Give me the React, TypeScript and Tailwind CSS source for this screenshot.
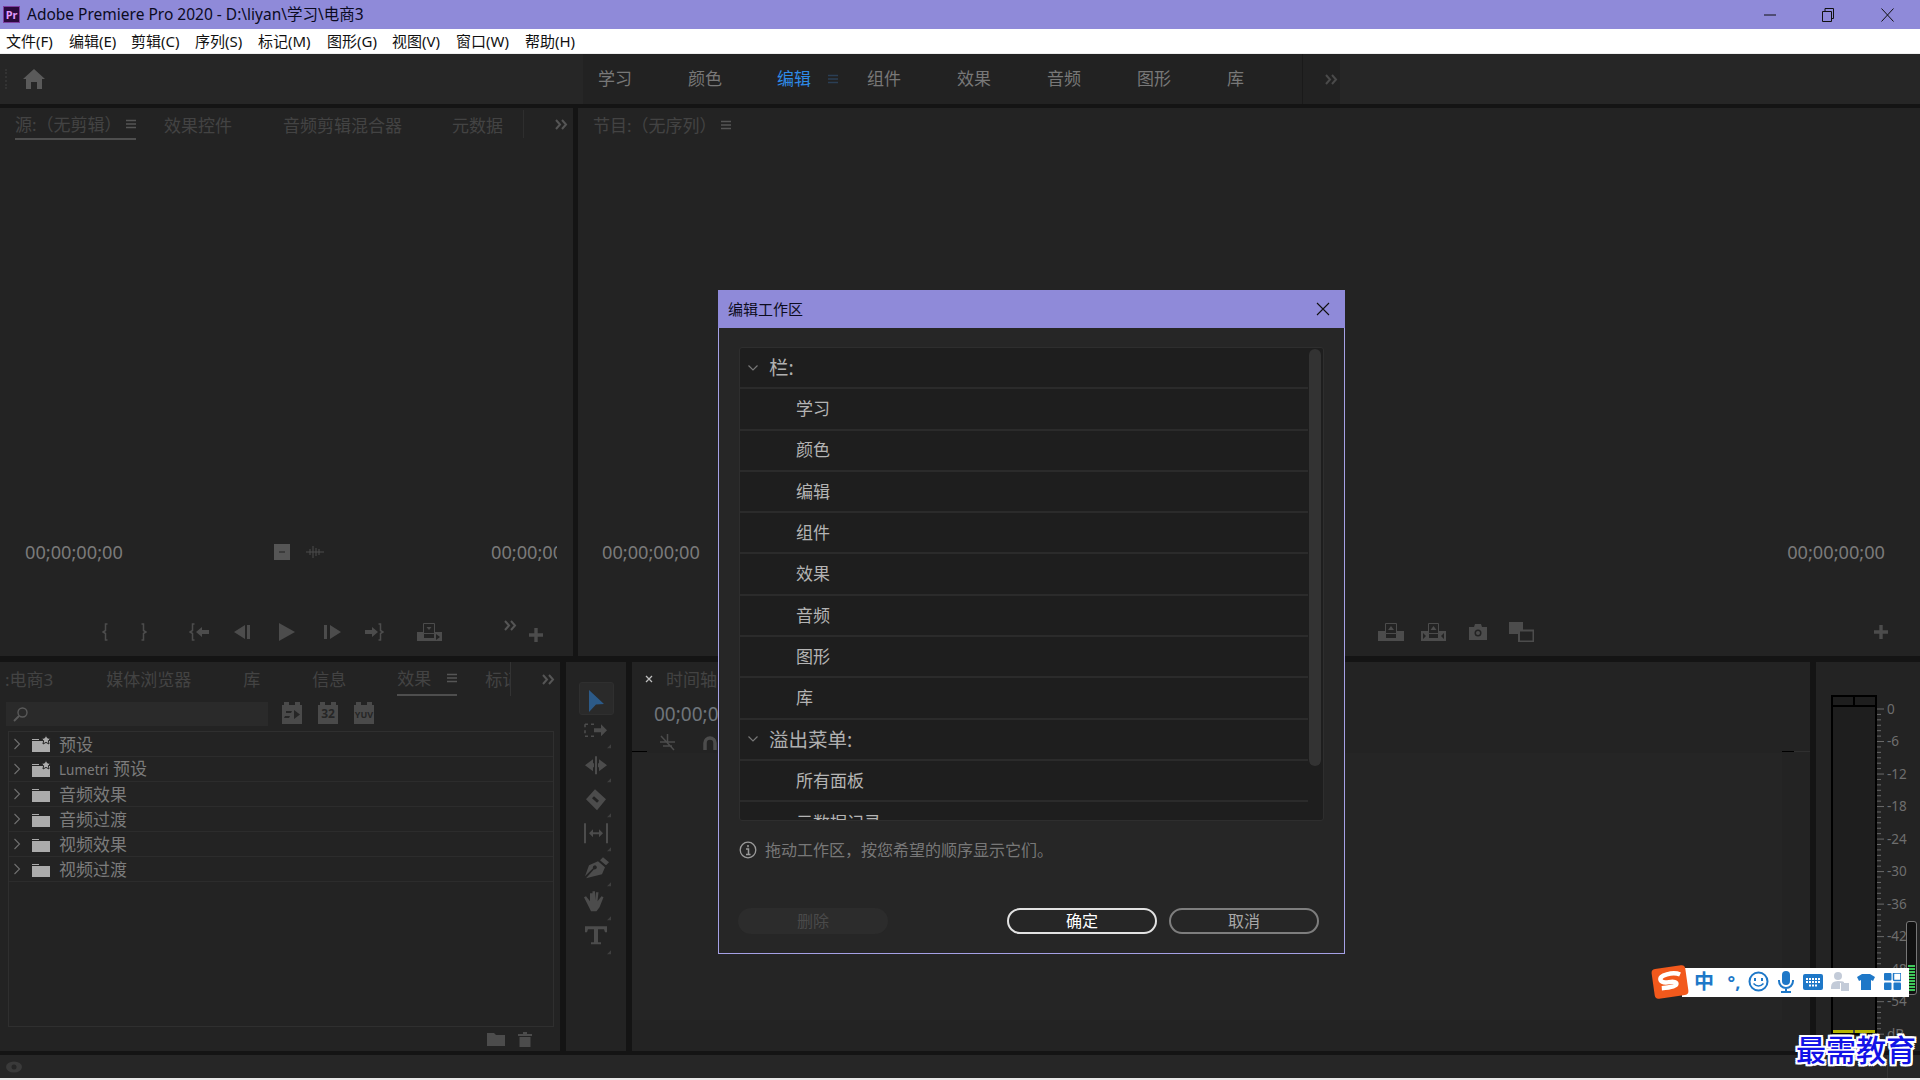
const tabText = "text-[17px] leading-none text-[#434343] whitespace-nowrap";
const dim = "#4c4c4c";

function MenuLines({ color = "#555555" }: { color?: string }) {
  return (
    <svg width="10" height="10" viewBox="0 0 10 10" className="shrink-0">
      <path d="M0 1.5H10M0 5H10M0 8.5H10" stroke={color} strokeWidth="1.4" />
    </svg>
  );
}

function Chevrons({ color = "#555555" }: { color?: string }) {
  return (
    <svg width="13" height="11" viewBox="0 0 13 11" className="shrink-0">
      <path d="M1 1l4 4.5-4 4.5M7 1l4 4.5-4 4.5" fill="none" stroke={color} strokeWidth="2" />
    </svg>
  );
}

function Plus() {
  return (
    <svg width="14" height="14" viewBox="0 0 14 14" className="shrink-0">
      <path d="M7 0v14M0 7h14" stroke={dim} strokeWidth="3.4" />
    </svg>
  );
}

function Ico({ w, h, ml = 0, children }: { w: number; h: number; ml?: number; children: React.ReactNode }) {
  return (
    <svg width={w} height={h} viewBox={`0 0 ${w} ${h}`} className="shrink-0" style={{ marginLeft: ml }} fill={dim}>
      {children}
    </svg>
  );
}

const braceL = "M5.500 1H3.500V7.500L1 9L3.500 10.500V17H5.500";
const braceR = "M.5 1H2.500V7.500L5 9L2.500 10.500V17H.5";

function SourceTransport() {
  return (
    <div className="h-[24px] flex items-center pl-[102px]">
      <Ico w={6} h={18}><path d={braceL} fill="none" stroke={dim} strokeWidth="1.500" /></Ico>
      <Ico w={6} h={18} ml={33}><path d={braceR} fill="none" stroke={dim} strokeWidth="1.500" /></Ico>
      <Ico w={20} h={18} ml={42}>
        <path d={braceL} fill="none" stroke={dim} strokeWidth="1.500" />
        <path d="M7 9l6-5v3h7v4h-7v3z" />
      </Ico>
      <Ico w={17} h={14} ml={25}><path d="M0 7l11-7v14zM13 0h3v14h-3z" /></Ico>
      <Ico w={16} h={18} ml={28}><path d="M0 0l16 9-16 9z" /></Ico>
      <Ico w={17} h={14} ml={29}><path d="M0 0h3v14H0zM6 0l11 7-11 7z" /></Ico>
      <Ico w={19} h={18} ml={24}>
        <path d="M13 9L7 4v3H0v4h7v3z" />
        <path d={braceR} transform="translate(13 0)" fill="none" stroke={dim} strokeWidth="1.500" />
      </Ico>
      <Ico w={25} h={18} ml={33}>
        <path d="M0 9h7v9H0zM17 9h8v9h-8zM7 15h10v3H7z" />
        <path d="M6.5.5h11v10h-11z" fill="#232323" stroke={dim} />
        <path d="M9.500 4h5l-2.500 3z" />
        <path d="M19 11l4 3-4 3z" fill="#232323" />
      </Ico>
      <div className="ml-[62px] -mt-[14px]"><Chevrons color="#555555" /></div>
      <div className="ml-[12px] mt-[6px]"><Plus /></div>
    </div>
  );
}

function ProgramButtons() {
  return (
    <div className="h-[24px] flex items-center">
      <Ico w={26} h={18}>
        <path d="M0 8h8v10H0zM18 8h8v10h-8zM8 15h10v3H8z" />
        <path d="M7.500.5h11v10h-11z" fill="#232323" stroke={dim} />
        <path d="M13 3l3 4h-6z" />
      </Ico>
      <Ico w={25} h={18} ml={17}>
        <path d="M0 8h8v10H0zM17 8h8v10h-8zM8 15h9v3H8z" />
        <path d="M7.500.5h10v10h-10z" fill="#232323" stroke={dim} />
        <path d="M12.500 3l3 4h-6z" />
        <path d="M2 10l3 3-3 3zM23 10l-3 3 3 3z" fill="#232323" />
      </Ico>
      <Ico w={18} h={16} ml={23}>
        <path d="M0 3h5l1-3h6l1 3h5v13H0z" />
        <circle cx="9" cy="9" r="3.500" fill="#232323" />
        <circle cx="9" cy="9" r="2" fill={dim} />
      </Ico>
      <Ico w={25} h={20} ml={22}>
        <path d="M0 0h14v12H0z" />
        <path d="M10 8.500h14.500v11H10z" fill="#232323" stroke={dim} strokeWidth="2" />
      </Ico>
      <div className="ml-[340px]"><Plus /></div>
    </div>
  );
}

function FolderIcon({ star }: { star?: boolean }) {
  return (
    <svg width="20" height="18" viewBox="0 0 20 18" className="shrink-0 ml-[10px]" fill="#ababab">
      <path d="M1 4h7v1H1zM1 6h18v11H1z" />
      {star && <path d="M15 0l1.500 3 3.300.4-2.400 2.300.6 3.300-3-1.600-3 1.600.6-3.300-2.400-2.300 3.300-.4z" stroke="#232323" strokeWidth="1" />}
    </svg>
  );
}

function ToolCorner() {
  return <path d="M30 30h-4l4-4z" fill="#3f3f3f" />;
}

const toolIcons: React.ReactNode[] = [
  <g transform="translate(0 3)">
    <path d="M4 3h3M10 3h3M4 3v3M4 9v3M4 15h3M10 15h3" fill="none" stroke={dim} strokeWidth="1.600" />
    <path d="M13 7h7V3l6 6-6 6v-4h-7z" />
  </g>,
  <g transform="translate(0 3)">
    <path d="M14 1h2v18h-2z" />
    <path d="M4 10l8-6v4h1v4h-1v4zM26 10l-8-6v4h-1v4h1v4z" />
  </g>,
  <g transform="translate(0 2)">
    <path d="M14 0l11 10-9 11L5 10zM13 7l-2 2 5 4.500 2-2z" fillRule="evenodd" />
  </g>,
  <g transform="translate(0 2)">
    <path d="M3 0h2v20H3zM25 0h2v20h-2z" />
    <path d="M8 10l4-4v3h6V6l4 4-4 4v-3h-6v3z" />
  </g>,
  <path d="M22 1l6 5-3 3-6-5zM17 5l7 6-3 7-16 4 8-9a2 2 0 1 0-1-1L4 20l4-11z" />,
  <path d="M6 13L3 7l2-1 4 5V3h2.500v7V1h2.500v9l1-8h2.500l-1 9 4-5 2 1-4 10-3 4H10z" />,
  <path d="M4 2h22v6h-2l-1-3h-6v13h3v2H10v-2h3V5H7L6 8H4z" />,
];

function ImeBar() {
  return (
    <div className="absolute left-[1653px] top-[964px] w-[256px] h-[35px] flex items-center">
      <div className="absolute left-[29px] top-[4px] right-0 h-[29px] bg-white" />
      <div className="relative w-[34px] h-[30px] rounded-[4px] -rotate-[8deg] bg-[#f2591c] flex items-center justify-center">
        <svg width="28" height="22" viewBox="0 0 28 22">
          <path d="M25 5Q20 2 12 3Q4 4 5 8Q6 11 13 11Q21 11 20 14Q19 17 5 16" fill="none" stroke="#ffffff" strokeWidth="4.500" />
        </svg>
      </div>
      <div className="relative flex items-center ml-[6px] text-[#1e78c8]">
        <span className="w-[22px] text-[20px] leading-none font-bold text-center">中</span>
        <span className="w-[24px] ml-[7px] text-[18px] leading-none font-bold text-center">°,</span>
        <svg width="21" height="21" viewBox="0 0 21 21" className="ml-[2px]">
          <circle cx="10.500" cy="10.500" r="9" fill="none" stroke="#1e78c8" strokeWidth="2" />
          <path d="M7 7v3M14 7v3" stroke="#1e78c8" strokeWidth="2" />
          <path d="M5.500 12.500q5 5 10 0" fill="none" stroke="#1e78c8" strokeWidth="1.600" />
        </svg>
        <svg width="16" height="22" viewBox="0 0 16 22" className="ml-[9px]" fill="#1e78c8">
          <rect x="4" y="0" width="8" height="14" rx="4" />
          <path d="M1 9v1a7 7 0 0 0 14 0V9M8 17v3M3 21h10" fill="none" stroke="#1e78c8" strokeWidth="2" />
        </svg>
        <svg width="20" height="16" viewBox="0 0 20 16" className="ml-[9px]">
          <rect x="0" y="0" width="20" height="16" rx="2" fill="#1e78c8" />
          <path d="M3 5h14M3 8h14M6 11.500h8" stroke="#ffffff" strokeWidth="2" strokeDasharray="2 1" />
        </svg>
        <svg width="18" height="19" viewBox="0 0 18 19" className="ml-[8px]" fill="#c3cbd8">
          <circle cx="7" cy="4" r="4" />
          <path d="M0 15q0-6 7-6t6 2H9v6H0z" />
          <rect x="10" y="11" width="8" height="8" />
        </svg>
        <svg width="18" height="16" viewBox="0 0 18 16" className="ml-[8px]" fill="#1e78c8">
          <path d="M5 0h8l5 3-2 4-2-1v10H4V6L2 7 0 3z" />
        </svg>
        <svg width="17" height="17" viewBox="0 0 17 17" className="ml-[9px]" fill="#1e78c8">
          <rect x="0" y="0" width="7.500" height="7.500" rx="1" />
          <rect x="9.500" y="0" width="7.500" height="7.500" rx="1" fill="#ffffff" stroke="#1e78c8" strokeWidth="1.500" />
          <rect x="0" y="9.500" width="7.500" height="7.500" rx="1" />
          <rect x="9.500" y="9.500" width="7.500" height="7.500" rx="1" />
        </svg>
      </div>
    </div>
  );
}

function Dialog() {
  const rows = ["学习", "颜色", "编辑", "组件", "效果", "音频", "图形", "库"];
  return (
    <div className="absolute left-[718px] top-[290px] w-[627px] h-[664px] border border-[#a5a1e6] border-t-0 bg-[#262626] flex flex-col">
      <div className="h-[38px] -mx-[1px] bg-[#8f8ad9] flex items-center pl-[10px] pr-[15px] justify-between">
        <span className="text-[15px] text-[#0c0c20]">编辑工作区</span>
        <svg width="14" height="14" viewBox="0 0 14 14">
          <path d="M1 1l12 12M13 1L1 13" stroke="#111111" strokeWidth="1.100" />
        </svg>
      </div>
      <div className="mt-[19px] mx-[20px] h-[474px] border border-[#2e2e2e] rounded-[3px] bg-[#1e1e1e] flex overflow-hidden">
        <div className="flex-1">
          <div className="h-[41.3px] border-b-2 border-[#2b2b2b] flex items-center pl-[7px]">
            <svg width="12" height="8" viewBox="0 0 12 8"><path d="M1.500 1.500L6 6l4.500-4.500" fill="none" stroke="#777777" strokeWidth="1.200" /></svg>
            <span className="ml-[10px] text-[19.500px] text-[#b0b0b0]">栏:</span>
          </div>
          {rows.map((r) => (
            <div key={r} className="h-[41.3px] border-b-2 border-[#2b2b2b] flex items-center pl-[56px] text-[17px] text-[#b4b4b4]">{r}</div>
          ))}
          <div className="h-[41.3px] border-b-2 border-[#2b2b2b] flex items-center pl-[7px]">
            <svg width="12" height="8" viewBox="0 0 12 8"><path d="M1.500 1.500L6 6l4.500-4.500" fill="none" stroke="#777777" strokeWidth="1.200" /></svg>
            <span className="ml-[10px] text-[19.500px] text-[#b0b0b0]">溢出菜单:</span>
          </div>
          <div className="h-[41.3px] border-b-2 border-[#2b2b2b] flex items-center pl-[56px] text-[17px] text-[#b4b4b4]">所有面板</div>
          <div className="h-[41.3px] flex items-center pl-[56px] text-[17px] text-[#b4b4b4]">元数据记录</div>
        </div>
        <div className="w-[15px] pl-[1px] pr-[2px] pt-[1px]">
          <div className="h-[417px] rounded-full bg-[#333333]" />
        </div>
      </div>
      <div className="mt-[19px] mx-[20px] h-[20px] flex items-center">
        <svg width="18" height="18" viewBox="0 0 18 18" className="shrink-0">
          <circle cx="9" cy="9" r="7.800" fill="none" stroke="#9a9a9a" strokeWidth="1.300" />
          <path d="M9 4v2.200M7 8h2.500v5M7 13.500h4.500" fill="none" stroke="#9a9a9a" strokeWidth="1.500" />
        </svg>
        <span className="ml-[8px] text-[16px] text-[#787878] whitespace-nowrap">拖动工作区，按您希望的顺序显示它们。</span>
      </div>
      <div className="mt-[48px] ml-[19px] flex">
        <div className="w-[150px] h-[26px] rounded-full bg-[#2c2c2c] text-[16px] text-[#4a4a4a] flex items-center justify-center">删除</div>
        <div className="ml-[119px] w-[150px] h-[26px] rounded-full border-2 border-[#e2e2e2] text-[16px] text-white flex items-center justify-center">确定</div>
        <div className="ml-[12px] w-[150px] h-[26px] rounded-full border-2 border-[#7e7e7e] text-[16px] text-[#a8a8a8] flex items-center justify-center">取消</div>
      </div>
    </div>
  );
}

export default function App() {
  const menus: [string, string][] = [
    ["文件(F)", "w-[63px]"], ["编辑(E)", "w-[62px]"], ["剪辑(C)", "w-[64px]"], ["序列(S)", "w-[63px]"],
    ["标记(M)", "w-[69px]"], ["图形(G)", "w-[65px]"], ["视图(V)", "w-[64px]"], ["窗口(W)", "w-[69px]"], ["帮助(H)", "w-[60px]"],
  ];
  const effects = ["预设", "Lumetri 预设", "音频效果", "音频过渡", "视频效果", "视频过渡"];
  const dbLabels = ["0", "-6", "-12", "-18", "-24", "-30", "-36", "-42", "-48", "-54", "dB"];
  return (
    <div className="relative w-screen h-screen overflow-hidden flex flex-col bg-[#141414] font-['Noto_Sans','Noto_Sans_CJK_SC',sans-serif]">
      {/* title bar */}
      <div className="h-[29px] shrink-0 bg-[#8f8ad9] flex items-center pl-[3px]">
        <div className="w-[17px] h-[17px] bg-[#2b0a3d] border border-[#7d3fa0] text-[#e39bff] text-[11px] leading-none font-bold flex items-center justify-center">Pr</div>
        <span className="ml-[7px] text-[15.500px] text-[#0b0b1e] whitespace-nowrap">Adobe Premiere Pro 2020 - D:\liyan\学习\电商3</span>
        <div className="ml-auto flex items-center pr-[26px]">
          <svg width="12" height="2" viewBox="0 0 12 2"><path d="M0 1h12" stroke="#111111" /></svg>
          <svg width="12" height="14" viewBox="0 0 12 14" className="ml-[46px]">
            <path d="M.5 3.500h9v10h-9zM3 3.500V.5h8.500v10H9.500" fill="none" stroke="#111111" />
          </svg>
          <svg width="13" height="14" viewBox="0 0 13 14" className="ml-[47px]"><path d="M.5.5l12 13M12.500.5l-12 13" stroke="#111111" /></svg>
        </div>
      </div>
      {/* menu bar */}
      <div className="h-[25px] shrink-0 bg-white border-b border-[#efefef] flex items-center pl-[6px] text-[15px] text-[#111111]">
        {menus.map(([m, w]) => (
          <span key={m} className={`${w} whitespace-nowrap`}>{m}</span>
        ))}
      </div>
      {/* workspace bar */}
      <div className="h-[50px] shrink-0 bg-[#262626] flex">
        <div className="w-[583px] flex items-center pl-[5px]">
          <div className="w-[2px] h-[20px] border-l-2 border-dotted border-[#333333]" />
          <svg width="22" height="20" viewBox="0 0 22 20" fill="#5a5a5a" className="ml-[16px]">
            <path d="M11 0l11 10h-3v10h-5v-7H8v7H3V10H0z" />
          </svg>
        </div>
        <div className="w-[720px] bg-[#222222] flex items-center pl-[15px] text-[17px] text-[#787878] border-r border-[#1a1a1a]">
          <span className="w-[90px]">学习</span>
          <span className="w-[89px]">颜色</span>
          <span className="text-[#2e8ae6] w-[51px]">编辑</span>
          <span className="w-[39px]"><MenuLines color="#2b3f55" /></span>
          <span className="w-[90px]">组件</span>
          <span className="w-[90px]">效果</span>
          <span className="w-[90px]">音频</span>
          <span className="w-[90px]">图形</span>
          <span>库</span>
        </div>
        <div className="w-[37px] bg-[#222222] flex items-center justify-center pl-[20px]"><Chevrons color="#4a4a4a" /></div>
      </div>
      <div className="flex-1 flex flex-col pt-[4px]">
        {/* upper panels */}
        <div className="h-[548px] shrink-0 flex">
          <div className="w-[573px] bg-[#232323] flex flex-col">
            <div className="h-[32px] flex items-center pl-[15px] relative">
              <div className="w-[121px] h-[32px] pt-[2px] border-b-2 border-[#4e4e4e] flex items-center justify-between">
                <span className={`${tabText} text-[#4e4e4e]`}>源:（无剪辑）</span>
                <MenuLines />
              </div>
              <span className={`${tabText} ml-[28px] pt-[2px]`}>效果控件</span>
              <span className={`${tabText} ml-[51px] pt-[2px]`}>音频剪辑混合器</span>
              <span className={`${tabText} ml-[50px] pt-[2px]`}>元数据</span>
              <div className="ml-[20px] w-px h-[28px] bg-[#2e2e2e]" />
              <div className="ml-auto mr-[5px]"><Chevrons /></div>
            </div>
            <div className="flex-1 flex flex-col justify-end pb-[12px]">
              <div className="h-[24px] flex items-center pl-[25px] text-[18.200px] leading-none text-[#7a7a7a]">
                <span className="w-[97px] whitespace-nowrap">00;00;00;00</span>
                <svg width="16" height="16" viewBox="0 0 16 16" className="ml-[152px]" fill="#555555">
                  <path d="M0 0h16v16H0z" />
                  <path d="M5 7.500h6v1H5z" fill="#232323" />
                </svg>
                <svg width="18" height="12" viewBox="0 0 18 12" className="ml-[16px]">
                  <path d="M0 6h18M4 3v6M7 0v12M10 2v8M13 3v6" stroke="#4c4c4c" />
                </svg>
                <span className="ml-[167px] w-[66px] overflow-hidden whitespace-nowrap">00;00;00;00</span>
              </div>
              <div className="h-[56px]" />
              <SourceTransport />
            </div>
          </div>
          <div className="w-[5px]" />
          <div className="flex-1 bg-[#232323] flex flex-col">
            <div className="h-[32px] pt-[2px] flex items-center pl-[15px]">
              <span className={tabText}>节目:（无序列）</span>
              <span className="ml-[4px]"><MenuLines /></span>
            </div>
            <div className="flex-1 flex flex-col justify-end pb-[12px]">
              <div className="h-[24px] flex items-center justify-between pr-[35px] pl-[24px] text-[18.200px] leading-none text-[#7a7a7a]">
                <span>00;00;00;00</span>
                <span>00;00;00;00</span>
              </div>
              <div className="h-[56px]" />
              <div className="flex justify-end pr-[32px]"><ProgramButtons /></div>
            </div>
          </div>
        </div>
        {/* lower panels */}
        <div className="h-[389px] shrink-0 mt-[6px] flex">
          <div className="w-[560px] bg-[#232323] flex flex-col">
            <div className="h-[34px] shrink-0 flex items-center pl-[5px]">
              <span className={tabText}>:电商3</span>
              <span className={`${tabText} ml-[53px]`}>媒体浏览器</span>
              <span className={`${tabText} ml-[52px]`}>库</span>
              <span className={`${tabText} ml-[52px]`}>信息</span>
              <div className="ml-[51px] w-[60px] h-[34px] border-b-2 border-[#4e4e4e] flex items-center justify-between">
                <span className={`${tabText} text-[#4e4e4e]`}>效果</span>
                <MenuLines />
              </div>
              <span className={`${tabText} ml-[28px] w-[25px] overflow-hidden`}>标记</span>
              <div className="w-px h-[34px] bg-[#333333]" />
              <div className="ml-auto mr-[5px]"><Chevrons /></div>
            </div>
            <div className="h-[35px] shrink-0 flex items-center pl-[6px]">
              <div className="w-[262px] h-[24px] bg-[#2a2a2a] flex items-center pl-[7px]">
                <svg width="16" height="16" viewBox="0 0 16 16">
                  <circle cx="9.500" cy="6.500" r="4.500" fill="none" stroke="#5a5a5a" strokeWidth="1.400" />
                  <path d="M6 10l-5 5" stroke="#5a5a5a" strokeWidth="1.800" />
                </svg>
              </div>
              {["", "32", "YUV"].map((t, i) => (
                <div key={t} className={`${i === 0 ? "ml-[14px]" : "ml-[16px]"} relative w-[20px] h-[19px] bg-[#4a4a4a] mt-[1px] flex items-center justify-center font-bold leading-none text-[#262626]`}>
                  {i === 0 ? (
                    <svg width="16" height="11" viewBox="0 0 16 11"><path d="M2 2h6L7 4H2zM1 7h5L5 9H0zM10 1l6 4.500-6 4.500z" fill="#262626" /></svg>
                  ) : (
                    <span className={i === 2 ? "text-[9px]" : "text-[12px]"}>{t}</span>
                  )}
                  <div className="absolute -top-[3px] left-[2px] w-[5px] h-[3px] bg-[#4a4a4a]" />
                  <div className="absolute -top-[3px] right-[2px] w-[5px] h-[3px] bg-[#4a4a4a]" />
                </div>
              ))}
            </div>
            <div className="ml-[8px] w-[546px] h-[296px] border border-[#2f2f2f]">
              {effects.map((e, i) => (
                <div key={e} className="h-[25px] border-b border-[#2c2c2c] flex items-center pl-[4px] text-[17px] leading-none text-[#7c7c7c]">
                  <svg width="8" height="12" viewBox="0 0 8 12" className="shrink-0"><path d="M1.500 1l5 5-5 5" fill="none" stroke="#707070" strokeWidth="1.100" /></svg>
                  <FolderIcon star={i < 2} />
                  <span className="ml-[8px] whitespace-nowrap">
                    {e.startsWith("Lumetri") ? <><span className="text-[13.500px]">Lumetri</span> 预设</> : e}
                  </span>
                </div>
              ))}
            </div>
            <div className="flex-1 flex items-center justify-end pr-[28px]">
              <svg width="18" height="13" viewBox="0 0 18 13" fill="#4c4c4c"><path d="M0 0h7l2 2h9v11H0z" /></svg>
              <svg width="14" height="15" viewBox="0 0 14 15" fill="#4c4c4c" className="ml-[13px]"><path d="M0 2h14v2H0zM5 0h4v2H5zM1.500 5h11v10h-11z" /></svg>
            </div>
          </div>
          <div className="w-[6px]" />
          <div className="w-[60px] bg-[#232323] flex flex-col items-center pt-[20px]">
            <div className="w-[35px] h-[33px] pt-[4px] rounded-[3px] bg-[#2a2a2a] border border-[#2f2f2f] flex items-center justify-center">
              <svg width="16" height="22" viewBox="0 0 16 22"><path d="M1 0l15 14-8 .5L1 22z" fill="#2c5a88" /></svg>
            </div>
            <div className="flex flex-col">
              {toolIcons.map((ic, i) => (
                <svg key={i} width="30" height="34.400" viewBox="0 -3 30 34" fill={dim} className="block">
                  {ic}
                  <ToolCorner />
                </svg>
              ))}
            </div>
          </div>
          <div className="w-[6px]" />
          <div className="w-[1178px] bg-[#232323] flex flex-col">
            <div className="h-[91px] shrink-0 flex flex-col">
              <div className="h-[34px] flex items-center pl-[13px]">
                <svg width="8" height="8" viewBox="0 0 8 8"><path d="M1 1l6 6M7 1L1 7" stroke="#bdbdbd" strokeWidth="1.300" /></svg>
                <span className={`${tabText} ml-[13px]`}>时间轴</span>
              </div>
              <div className="h-[36px] pl-[22px] flex items-center text-[19px] leading-none text-[#6f757b]">00;00;00;00</div>
              <div className="flex-1 pl-[27px] flex items-center">
                <svg width="17" height="17" viewBox="0 0 17 17" fill="none" stroke="#4c4c4c" strokeWidth="1.500">
                  <path d="M8.500 0v8M1 8h15M4 12h9M2 2l13 14" />
                </svg>
                <svg width="14" height="14" viewBox="0 0 14 14" fill="none" stroke="#4c4c4c" strokeWidth="3.500" className="ml-[27px]">
                  <path d="M2 14V7a5 5 0 0 1 10 0v7" />
                </svg>
              </div>
            </div>
            <div className="flex justify-between h-[2px] shrink-0 -mt-[2px]">
              <div className="w-[15px] h-[1px] bg-black" />
              <div className="w-[28px] h-[1px] bg-[#2f2f2f]"><div className="w-[12px] h-[1px] bg-black" /></div>
            </div>
            <div className="flex-1 flex flex-col">
              <div className="h-[267px] mr-[28px] bg-[#252525]" />
            </div>
          </div>
          <div className="w-[6px]" />
          <div className="flex-1 bg-[#232323] flex pt-[33px] pl-[15px]">
            <div className="w-[46px] h-[340px] border-2 border-black bg-[#1e1e1e] flex flex-col">
              <div className="h-[10px] border-b-2 border-black flex justify-center"><div className="w-[2px] h-full bg-black" /></div>
              <div className="flex-1" />
              <div className="h-[3px] bg-[#b5b500] flex justify-center"><div className="w-[2px] h-full bg-[#444444]" /></div>
            </div>
            <svg width="8" height="340" viewBox="0 0 8 340" className="shrink-0">
              {Array.from({ length: 61 }).map((_, i) => {
                const y = 14 + i * 5.42;
                return <path key={i} d={`M0 ${y}H${i % 6 === 0 ? 7 : 4}`} stroke="#6a6a6a" strokeWidth="1" />;
              })}
            </svg>
            <div className="-mt-[2px] pl-[2px] flex flex-col text-[13.500px] leading-none text-[#6e6e6e]">
              {dbLabels.map((d) => (
                <div key={d} className="h-[32.500px] shrink-0 flex items-center whitespace-nowrap">{d}</div>
              ))}
            </div>
          </div>
        </div>
        {/* status bar */}
        <div className="h-[23px] shrink-0 mt-[4px] bg-[#262626] flex items-center pl-[5px]">
          <svg width="18" height="14" viewBox="0 0 18 14"><ellipse cx="9" cy="7" rx="8" ry="5.500" fill="#3a3a3a" /><circle cx="9" cy="7" r="2.500" fill="#262626" /></svg>
          <div className="ml-auto mr-[32px] w-px h-[23px] bg-[#333333]" />
        </div>
        <div className="h-[2px] shrink-0 bg-[#e9e9e9]" />
      </div>

      <Dialog />
      {/* level indicator of the input method */}
      <div className="absolute left-[1906px] top-[921px] w-[11px] h-[74px] rounded-[3px] border border-[#777777] bg-[#111111] flex flex-col justify-end gap-[1px] px-[1px] pb-[3px]">
        {Array.from({ length: 9 }).map((_, i) => (
          <div key={i} className="h-[2px] bg-[#3fc75a]" />
        ))}
      </div>
      <ImeBar />
      <div className="absolute left-[1796px] top-[1030px] text-[30px] leading-[36px] font-medium text-[#1212e6] whitespace-nowrap font-['Noto_Sans_CJK_SC',serif] [text-shadow:2px_0_0_#fff,-2px_0_0_#fff,0_2px_0_#fff,0_-2px_0_#fff,2px_2px_0_#fff,-2px_-2px_0_#fff,2px_-2px_0_#fff,-2px_2px_0_#fff]">
        最需教育
      </div>
    </div>
  );
}
